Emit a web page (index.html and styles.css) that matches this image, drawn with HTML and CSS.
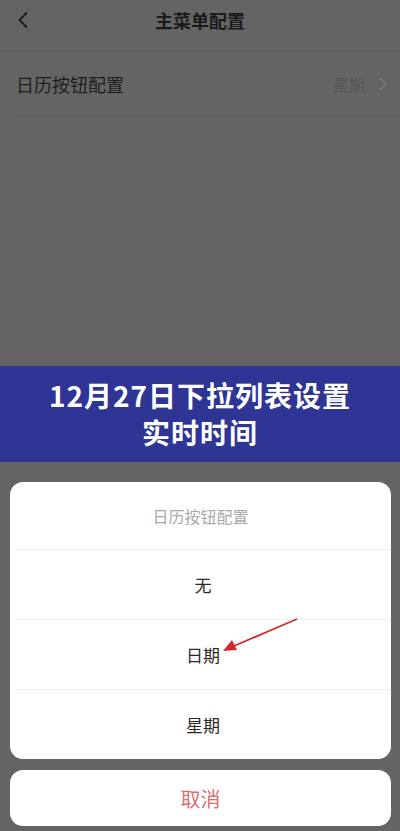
FILE: index.html
```html
<!DOCTYPE html>
<html lang="zh-CN">
<head>
    <meta charset="UTF-8">
    <meta name="viewport" content="width=device-width, initial-scale=1.0">
    <title>主菜单配置</title>
    <link rel="stylesheet" href="styles.css">
</head>
<body>
    <div class="screen">
        <div class="nav-bar">
            <svg class="back-icon" width="12" height="18" viewBox="0 0 12 18">
                <path d="M10 1.5 L2.5 9 L10 16.5" fill="none" stroke="#1c1c1c" stroke-width="1.8"/>
            </svg>
            <span class="nav-title">主菜单配置</span>
        </div>
        <div class="setting-row">
            <span class="setting-label">日历按钮配置</span>
            <span class="setting-value">星期
                <svg width="8" height="14" viewBox="0 0 8 14">
                    <path d="M1 1 L7 7 L1 13" fill="none" stroke="#7c7c7c" stroke-width="1.3"/>
                </svg>
            </span>
        </div>

        <div class="banner">
            <h1>12月27日下拉列表设置<br>实时时间</h1>
        </div>

        <div class="sheet">
            <div class="sheet-card">
                <div class="sheet-title">日历按钮配置</div>
                <div class="sheet-item">无</div>
                <div class="sheet-item">日期
                    <!-- red pointer drawn over the selected option -->
                    <svg class="pointer" width="80" height="40" viewBox="0 0 80 40">
                        <line x1="77" y1="2" x2="14" y2="29" stroke="#d42a2a" stroke-width="1.8"/>
                        <polygon points="3,34 12,23 17,33" fill="#d42a2a"/>
                    </svg>
                </div>
                <div class="sheet-item">星期</div>
            </div>
            <div class="sheet-card cancel">取消</div>
        </div>
    </div>
</body>
</html>
```

FILE: styles.css
```css
* {
    box-sizing: border-box;
}
body {
    margin: 0;
    background: #646464;
    font-family: "Noto Sans CJK SC", "Noto Sans", sans-serif;
}
.screen {
    width: 400px;
    height: 831px;
    display: flex;
    flex-direction: column;
    overflow: hidden;
}
.nav-bar {
    position: relative;
    height: 52px;
    border-bottom: 1px solid #5a5a5a;
    display: flex;
    align-items: center;
    justify-content: center;
}
.back-icon {
    position: absolute;
    left: 17px;
    top: 11px;
}
.nav-title {
    font-size: 18px;
    font-weight: 700;
    color: #1a1a1a;
    margin-top: -12px;
}
.setting-row {
    height: 64px;
    margin-left: 13px;
    padding: 0 13px 0 3px;
    border-bottom: 1px solid #5c5c5c;
    display: flex;
    align-items: center;
    justify-content: space-between;
}
.setting-label {
    font-size: 18px;
    color: #1e1e1e;
}
.setting-value {
    font-size: 16px;
    color: #575757;
    display: flex;
    align-items: center;
    gap: 14px;
}
.banner {
    margin-top: 250px;
    height: 96px;
    background: #2e3594;
    display: flex;
    align-items: center;
    justify-content: center;
}
.banner h1 {
    margin: 0;
    color: #fff;
    font-size: 28px;
    font-weight: 700;
    letter-spacing: 1px;
    line-height: 37px;
    text-align: center;
}
.sheet {
    margin-top: 20px;
    padding: 0 9px 0 10px;
    display: flex;
    flex-direction: column;
    gap: 11px;
}
.sheet-card {
    background: #fff;
    border-radius: 13px;
    overflow: hidden;
}
.sheet-title {
    height: 67px;
    display: flex;
    align-items: center;
    justify-content: center;
    font-size: 16px;
    color: #a9a9a9;
}
.sheet-item {
    position: relative;
    height: 70px;
    margin-left: 5px;
    border-top: 1px solid #f0f0f0;
    display: flex;
    align-items: center;
    justify-content: center;
    font-size: 17px;
    color: #2a2a2a;
}
.pointer {
    position: absolute;
    left: 205px;
    top: -3px;
}
.cancel {
    height: 56px;
    display: flex;
    align-items: center;
    justify-content: center;
    font-size: 20px;
    color: #d6706f;
}
```
